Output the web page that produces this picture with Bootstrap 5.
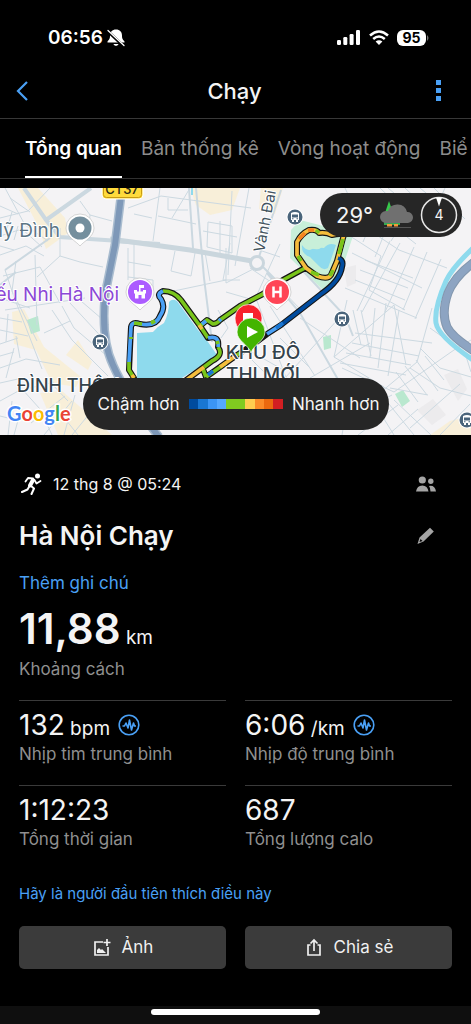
<!DOCTYPE html>
<html lang="vi">
<head>
<meta charset="utf-8">
<meta name="viewport" content="width=device-width, initial-scale=1">
<title>Chạy</title>
<link href="https://cdn.jsdelivr.net/npm/bootstrap@5.3.0/dist/css/bootstrap.min.css" rel="stylesheet">
<style>
  body { background: #000; color: #f4f4f4; font-family: Inter, "Noto Sans", sans-serif; font-size: 17px; line-height: 24px; }
  svg { display: block; flex: none; }
  .status { height: 64px; padding: 12px 42px 0 48px; font-weight: 600; font-size: 19px; color: #fff; }
  .battery { background: #fff; color: #000; border-radius: 6px; width: 29px; height: 16px; font-size: 14px; line-height: 16px; font-weight: 700; }
  .topbar { height: 55px; padding: 0 26px 0 16px; border-bottom: 1px solid #383838; }
  .topbar h1 { font-size: 22px; line-height: 28px; font-weight: 500; }
  .icon-btn { background: none; border: 0; padding: 0; color: #4aa0f5; width: 14px; }
  .icon-btn.soft { color: #a4a4a4; width: 20px; }
  .tabs { height: 60px; padding-left: 25px; gap: 19px; border-bottom: 1px solid #303030; margin-bottom: 9px; font-size: 19px; }
  .tabs a { color: #8c8c8c; text-decoration: none; white-space: nowrap; line-height: 60px; height: 59px; font-weight: 400; }
  .tabs a.active { color: #fff; font-weight: 600; border-bottom: 2px solid #fff; }
  .map-box { height: 247px; background: #f4f3f5; }
  .map-box > svg { width: 100%; height: 100%; }
  .pill { background: #262626; border-radius: 26px; }
  .weather { top: 5px; right: 9px; height: 44px; width: 142px; padding: 0 4px 0 16px; font-size: 22px; }
  .legend-pill { bottom: 5px; height: 52px; width: 306px; padding: 0 9px 0 15px; white-space: nowrap; }
  .scale { width: 94px; height: 10px; }
  .scale i { flex: 1; }
  .details { padding: 37px 19px 0; }
  .date { font-size: 16px; }
  .name { font-size: 26px; line-height: 32px; font-weight: 600; }
  .name-row { margin-bottom: 19px; }
  a.act { color: #4aa0f5; text-decoration: none; }
  .big { font-size: 42px; line-height: 44px; font-weight: 600; margin: 12px 0 6px; }
  .unit { font-size: 19px; line-height: 1; font-weight: 400; }
  .muted { color: #8f8f8f; }
  .distance { margin-bottom: 19px; }
  .stats { gap: 0 19px; display: grid; grid-template-columns: 1fr 1fr; }
  .stat { border-top: 1px solid #3a3a3a; height: 85px; padding-top: 6px; }
  .val { font-size: 28px; line-height: 34px; height: 35px; }
  .like { font-size: 15px; margin: 12px 0 20px; }
  .act-btn { background: #3b3b3b; color: #f0f0f0; border-radius: 5px; height: 43px; font-size: 17px; padding: 0; border: 0; gap: 10px; }
  .homebar { background: #0f0f0f; height: 18px; padding-top: 3px; }
  .homebar span { background: #fff; border-radius: 3px; width: 36%; height: 6px; }
</style>
</head>
<body class="d-flex flex-column min-vh-100">
<div class="status d-flex align-items-center">
  <span>06:56</span>
  <svg class="ms-1" width="18" height="18" viewBox="0 0 18 18"><path fill="#fff" d="M9 .5c3.800 0 6 2.500 6 6 0 3.500 1 4 2.500 6v1H.5v-1c1.500-2 2.500-2.500 2.500-6C3 3 5.200.5 9 .5zM6.500 15h5c-.5 2.400-4.500 2.400-5 0z"/><path stroke="#000" stroke-width="3" d="M0 1.500l17 16"/><path stroke="#fff" stroke-width="1.300" stroke-linecap="round" d="M1 1.500l16 15"/></svg>
  <svg class="ms-auto" width="24" height="16" viewBox="0 0 24 16" fill="#fff"><rect y="10" width="4" height="5" rx="1.200"/><rect x="6.300" y="7" width="4" height="8" rx="1.200"/><rect x="12.600" y="4" width="4" height="11" rx="1.200"/><rect x="19" y="0" width="4" height="15" rx="1.200"/></svg>
  <svg class="mx-2" width="20" height="16" viewBox="0 0 20 16" fill="none" stroke="#fff" stroke-width="2.500"><path d="M1 5.500q9-8 18 0M4.200 9q5.800-5 11.600 0"/><path fill="#fff" stroke="none" d="M6.600 11.500q3.400-2.700 6.800 0L10 15z"/></svg>
  <span class="battery text-center">95</span>
  <svg width="3" height="6" viewBox="0 0 3 6"><path fill="#777" d="M1 0q3 3 0 6z"/></svg>
</div>
<header class="topbar d-flex align-items-center justify-content-between">
  <button class="icon-btn" aria-label="Quay lại"><svg width="14" height="22" viewBox="0 0 14 22" fill="none" stroke="currentColor" stroke-width="2.200"><path d="M11 2L2 11l9 9"/></svg></button>
  <h1 class="m-0 ps-2">Chạy</h1>
  <button class="icon-btn" aria-label="Thêm"><svg class="mx-auto" width="5" height="22" viewBox="0 0 5 22" fill="currentColor"><path d="M0 0h5v5H0zM0 8h5v5H0zM0 16h5v5H0z"/></svg></button>
</header>
<nav class="tabs d-flex overflow-hidden">
  <a href="#" class="active" aria-current="page">Tổng quan</a><a href="#">Bản thống kê</a><a href="#">Vòng hoạt động</a><a href="#">Biể</a>
</nav>
<section class="map-box position-relative overflow-hidden">
<svg viewBox="0 0 471 247" preserveAspectRatio="xMidYMid slice" font-family="Inter, sans-serif">
  <defs>
    <g id="bus"><circle r="8.500" fill="#fff"/><circle r="7.500" fill="#4a647b"/><path fill="#fff" fill-rule="evenodd" d="M-4-4q4-2 8 0v7h-1v2h-2v-2h-2v2h-2v-2h-1zM-3-2.500v3h6v-3zM-3 1.300v1h1.500v-1zM1.500 1.300v1H3v-1z"/></g>
    <g id="pin"><path fill="#fff" stroke="#bbb" stroke-width=".6" d="M0 18C-4 13-14 9-14 0A14 14 0 0114 0C14 9 4 13 0 18z"/></g>
  </defs>
  <!-- built-up areas -->
  <g fill="#faedcf">
    <path d="M18 0h20l27 30 3 15-22 16-9-25zM190 0h50l-8 22-22 5-14-10zM261 0h22l-8 26-16-5zM12 124l12-3 20 38 37 30-5 10-24-4-16-33-22-6zM40 205l22-2 50 44H58zM78 152l14 22-4 8-22-15zM430 247l20-14 21-5v19z" opacity=".75"/>
  </g>
  <g fill="#ecebed"><path d="M444 187l14-6 9 20-9 12zM417 222l16-11 13 16-14 10zM344 80l12-3v18l-9 4z"/></g>
  <g fill="#b9e8cf"><path d="M27 132l11-4 2 15-9 3zM323 149l8-2v13l-7 2zM395 206l8-4 7 11-8 6z"/></g>
  <path fill="#c8efd9" d="M300 32l-9 10-1 28 33 32 16-12 14-42-10-5z"/>
  <path fill="#8edaed" d="M302 57q5 7 10 4 8-2 12-1 5-6 12-3l-8 23q-5 3-9-2l-9-9q-9-3-8-12z"/>
  <path fill="#c8efd9" d="M307 54q8-4 16 2-2 8-12 4z"/>
  <!-- local streets -->
  <g fill="none" stroke="#ccd9e1" stroke-width="1">
    <path d="M0 30l28-7 22-23M5 0l20 37 23 16M0 48l22-7 20 18M10 10l20 14M0 67l26-9 18 10M16 73l-4 30 25 50M3 88l37-9 20 36M35 67l2 70M60 40v28l20 6 23 5M80 13l10 14 22 6M90 27l-2 21M60 68L37 89M0 110l30 10M5 122l80-12M5 82l9 27 28 72M44 145l26-12M52 122l20 30 36 36M62 118l12 22 33 28M70 115l38 41M74 107l35 30M0 180l26-9 34 6M14 160l-8 30M0 213l22-12 18 20 12 26M22 202l32-8M31 235l34-27M44 247l28-34M58 222l20 25M75 207l-11 40M90 225l-18 22M50 194l18 19"/>
    <path d="M0 130l22 4M0 142l28 6M8 126l-2 28M0 156l18-6M16 148l4 22M0 168l14-4M0 195l18-4M12 213l-4 34M0 228l16 4M20 225l-6 22M0 18l18 8M12 24l-6 20M0 58l14 4M18 38l-4 14"/>
    <path d="M128 20l33-12 90 12M160 0l-7 53M134 26l18 4M158 28l38 8M168 10v12h20M190 0l-18 30M203 43l34 6M208 34l24 4v27l-25-6zM220 33v32M232 3l-4 84M230 55l-7 37h17M210 93l-5-29M128 60v32M134 55v45M128 74l23 4M128 89l25 3v15M175 63l-4 20 20 5 4-23M169 104l57-12M226 104l31 9M226 60v35l35-18M249 0l-14 78M280 56l-25 55M280 69l-24-8M250 80l30 20 20 21M257 113l33 87"/>
    <path d="M345 0l18 38 36 24 48 18M340 20l30-14 26 15M380 0l44 42M405 0l35 33M420 0l30 25M360 12l56 44M374 5l42 34M388 0l45 38M399 39l20-24 40 15M445 0l-17 37M434 0l31 31M377 21l-14 33M395 19l-20 50M415 15l-24 38M350 48l31 20-12 34 36 20M390 53l-33 70M400 55l-38 69M414 59l-29 65M427 64l-24 58M441 71l-26 60M352 65l70 35M345 100l72 30M365 72l48 18M360 82l48 18M355 92l50 20"/>
    <path d="M347 112l-13 57 50 30M334 169l60-52 12 60M353 122l8 35M361 122l10 46M375 120l-5 50M386 115l-8 65M399 122l-11 66M355 145l77 10M352 155l67 13M346 165l65 12M340 175l66 12M432 120l-15 54-36 30M430 140l35 25 6 19M420 160l20 20 31 9M410 180l30 20 31 8M396 184l22 30M405 178l22 29M416 172l22 31M425 168l19 24M390 200l38 7M366 202l28 45M380 205l34 42M394 212l37 35M342 180l52 24 60-42 17-10M350 200l-8 47M342 232l50-25M358 247l40-30M388 247l30-26M410 240l50-44M440 247l30-31"/>
    <path d="M218 122l10 18-7 10M250 170l20 20M245 160l40 23M280 150l30 30M285 190l54-60M310 190l60-35M270 118l45 70M300 130l60 40"/>
  </g>
  <g fill="none" stroke="#cbd8e0" stroke-width="2">
    <path d="M24 0l22 32 14 17 60 4M46 32L91 0M112 53l48 3" stroke-width="4"/><path d="M50 50L5 82M189 0l4 60M196 0l8 90 8 64M257 75l24-73M267 85l33 40 40 70M263 79l20 20M303 83l42 45 8 20M0 97l16-13"/>
  </g>
  <path d="M110 51l80 11 62 11" fill="none" stroke="#cad6dd" stroke-width="5"/>
  <circle cx="257" cy="75" r="6.500" fill="#f4f3f5" stroke="#cad6dd" stroke-width="3"/>
  <path d="M192 0v7" stroke="#8edaed" stroke-width="2"/>
  <!-- highway and river -->
  <path d="M122 0l-7 57-10 50q-4 45 8 70 12 28 46 72" fill="none" stroke="#a9bccf" stroke-width="9"/>
  <path d="M122 0l-7 57-10 50q-4 45 8 70 12 28 46 72" fill="none" stroke="#7e98b8" stroke-width="6"/>
  <path d="M473 60Q452 80 446 93 434 120 436 135 438 148 473 172" fill="none" stroke="#8edaed" stroke-width="5"/>
  <path d="M474 74Q454 89 448 105 441 125 447 139 452 149 474 163" fill="none" stroke="#8397ae" stroke-width="9"/>
  <path d="M474 74Q454 89 448 105 441 125 447 139 452 149 474 163" fill="none" stroke="#8da4c2" stroke-width="7"/>
  <path fill="#8edaed" d="M169 114q3-4 8-1L198 142l10 12 9 13-16 11-24 15h-40v-48l16-1q5-6 11-9 5-10 5-21z"/>
  <!-- run track -->
  <g fill="none" stroke-linejoin="round" stroke-linecap="round">
    <path stroke="#151515" stroke-width="6" d="M134 190l-5-8 2-43q1-6 9-3 16 3 20-8 6-9 1-17-5-5 2-8 11 0 18 9L200 138l8 12q12-3 10 9 6 8-6 14l-27 20M200 138l7-6 6 4q4 0 7-4L240 118 263 106 283 92 305 80M206 189l-3-8M206 189l31-22 14-9M251 158l16-12 14-9 40-31q19-13 21-27 2-7-4-9M306 80l-9-13v-13q4-8 12-12 8-1 10 3 7-1 13 2 14-3 11 3l-6 23-6 14q-3 5-14 1z"/>
    <g stroke-width="3.700" stroke-linecap="butt">
      <path stroke="#79c51b" d="M134 190l-5-8v-8M163 103q11 0 18 9L200 138l8 12M200 138l7-6 6 4q4 0 7-4L240 118 263 106 283 92 305 80M218 159q6 8-6 14l-8 6M206 189l-3-8M206 189l20-14M237 167l6-4"/>
      <path stroke="#4aa0f5" d="M129 174l2-35q1-6 9-3 16 3 20-8 6-9 1-17-5-5 2-8M208 150q12-3 10 9M267 146l14-9M202 136l4-3M219 133l2-2"/>
      <path stroke="#79c51b" d="M131 149v2M134 135l8 1M151 135l4-2M217 153l1 3"/>
      <path stroke="#f5bd3c" d="M204 179l-19 14M220 179l17-12M199 137l3 4M132 187l2 3M306 80l-9-13v-13q4-8 12-12 8-1 10 3 7-1 13 2 14-3 11 3l-6 23-6 14q-3 5-14 1z"/>
      <path stroke="#f58220" d="M299 51l6-6M308 42l6 0"/>
      <path stroke="#79c51b" d="M316 42l3 3M343 51l-4 15M298 68l3 5M311 84l8 3M333 82l-3 6"/>
      <path stroke="#004b9e" d="M281 137l40-31q19-13 21-27 2-7-4-9"/>
      <path stroke="#1976d2" d="M208 187l5-4M276 140l7-5M251 158l2-4"/>
    </g>
  </g>
  <!-- place labels -->
  <g stroke="#fff" stroke-width="2" paint-order="stroke" stroke-linejoin="round">
    <text x="60" y="49" text-anchor="end" font-size="19" fill="#5c7585">Mỹ Đình</text>
    <text x="119" y="113" text-anchor="end" font-size="19" fill="#8c48d6">ếu Nhi Hà Nội</text>
    <text x="17" y="204" font-size="18" font-weight="500" fill="#35434c">ĐÌNH THÔN</text>
    <text x="263" y="171" text-anchor="middle" font-size="19" font-weight="500" fill="#35434c">KHU ĐÔ</text>
    <text x="263" y="193" text-anchor="middle" font-size="19" font-weight="500" fill="#35434c">THỊ MỚI</text>
    <text transform="translate(264 65) rotate(-79)" font-size="15" fill="#44545e">Vành Đai</text>
  </g>
  <rect x="102" y="-10" width="41" height="21" rx="4" fill="#ffdb3c" stroke="#fff"/><rect x="103.500" y="-9" width="38" height="18.500" rx="3" fill="none" stroke="#c89c14"/>
  <text x="122" y="6" text-anchor="middle" font-size="13" font-weight="500" fill="#2d2b18">CT37</text>
  <use href="#pin" x="80" y="40"/><circle cx="80" cy="40" r="11.500" fill="#748f9e"/><circle cx="80" cy="40" r="4.500" fill="#fff"/>
  <use href="#pin" x="140" y="104"/><circle cx="140" cy="104" r="12" fill="#ac5cff"/><path fill="#fff" fill-rule="evenodd" d="M134 102h3v1.500h2v-6.500h5v3h-3.500v3.500h2.500v-1.500h3v3.500h-1v5h-10v-5h-1zM138.500 110.500h3v-3.500h-3z"/>
  <use href="#pin" x="277" y="104"/><circle cx="277" cy="104" r="12" fill="#ff4556"/><path stroke="#fff" stroke-width="2.500" d="M273.500 98.500v11M280.500 98.500v11M273 104h8"/>
  <use href="#bus" x="100" y="154"/><use href="#bus" x="295" y="29"/><use href="#bus" x="342" y="131"/><use href="#bus" x="467" y="232"/>
  <path fill="#f8222d" stroke="#fff" stroke-width=".7" d="M249 154c-3-8-14-12-14-24a13.500 13.500 0 0127 0c0 12-10 17-13 24z"/><path fill="#fff" d="M243 125h10v9h-10z"/>
  <path fill="#43b400" stroke="#fff" stroke-width=".7" d="M251 165c-2-8-14-12-14-21a14 14 0 0128 0c0 9-12 13-14 21z"/><path fill="#fff" d="M247 138l11 6-11 6z"/>
  <text x="7" y="233" font-family="Lato, sans-serif" font-size="20" font-weight="700" stroke="#fff" stroke-width="3" paint-order="stroke"><tspan fill="#4285f4">G</tspan><tspan fill="#ea4335">o</tspan><tspan fill="#fbbc04">o</tspan><tspan fill="#4285f4">g</tspan><tspan fill="#34a853">l</tspan><tspan fill="#ea4335">e</tspan></text>
</svg>
<div class="pill weather position-absolute d-flex align-items-center justify-content-between">
  <span>29°</span>
  <svg width="34" height="30" viewBox="0 0 34 30"><path fill="#37c84b" d="M9 1l4 12H5z"/><path fill="#36a852" d="M4 22h16v3H4z"/><path fill="#f39a3b" d="M7 24h5v2.500H7zM14 24h4v2.500h-4z"/><path stroke="#555" d="M4 27.500h27"/><path fill="#707070" d="M6 23a6 6 0 010-12h2a10 10 0 0119 1 5.500 5.500 0 011 11z"/></svg>
  <svg width="38" height="38" viewBox="0 0 38 38"><circle cx="19" cy="19" r="17.500" fill="none" stroke="#e6e6e6" stroke-width="1.500"/><path fill="#fff" d="M16 1.500h6l-3 9z"/><text x="19" y="24" text-anchor="middle" font-size="14" fill="#f4f4f4">4</text></svg>
</div>
<div class="pill legend-pill position-absolute start-50 translate-middle-x d-flex align-items-center justify-content-between">
  <span>Chậm hơn</span>
  <div class="scale d-flex"><i style="background:#004b9e"></i><i style="background:#1976d2"></i><i style="background:#3b95f5"></i><i style="background:#55a8ff"></i><i style="background:#80cb20"></i><i style="background:#80cb20"></i><i style="background:#ffcd50"></i><i style="background:#fb8c28"></i><i style="background:#eb690f"></i><i style="background:#d21f22"></i></div>
  <span>Nhanh hơn</span>
</div>
</section>
<main class="details flex-grow-1">
  <div class="d-flex align-items-center date mb-4">
    <svg class="me-2" width="26" height="22" viewBox="0 0 26 22" fill="none" stroke="#fff" stroke-linecap="round" stroke-linejoin="round"><circle cx="18.500" cy="3" r="2.500" fill="#fff" stroke="none"/><path stroke-width="4" d="M14 7l-3 5.500"/><path stroke-width="1.800" d="M14 5.500l-5-.5-2.500 3.500M15.500 7l2 3.500 4-2.500"/><path stroke-width="2" d="M11.500 12.500l3.500 3-2.500 5.500M10.500 13L8.500 16.500 3 19"/></svg>
    <span>12 thg 8 @ 05:24</span>
    <svg class="ms-auto me-3" width="20" height="16" viewBox="0 0 20 16" fill="#a4a4a4"><circle cx="6.300" cy="4" r="3.600"/><circle cx="14.800" cy="5.300" r="2.700"/><path d="M0 15.500Q1 9.500 6.300 9.500t6.200 6zM13 10q6-1 7 5.500h-5.500Q14.500 12 13 10z"/></svg>
  </div>
  <div class="name-row d-flex align-items-center justify-content-between">
    <h2 class="name m-0">Hà Nội Chạy</h2>
    <button class="icon-btn soft me-3" aria-label="Sửa"><svg width="20" height="18" viewBox="0 0 20 18"><path fill="currentColor" fill-rule="evenodd" d="M14 .8L17.800 4.600 7.500 14.500 1.500 17l2-6.500zM4.500 12l-1 3 3-1z"/></svg></button>
  </div>
  <a class="act d-block" href="#">Thêm ghi chú</a>
  <div class="big">11,88<span class="unit"> km</span></div>
  <div class="muted distance">Khoảng cách</div>
  <div class="stats">
    <div class="stat"><div class="val d-flex align-items-center"><span>132<span class="unit"> bpm</span></span><svg class="ms-2" width="22" height="22" viewBox="0 0 22 22" fill="none" stroke="#4aa0f5" stroke-width="1.600"><circle cx="11" cy="11" r="9.800"/><path d="M4.500 12h2L8 9l2 5 1.500-8 2 10L15.500 9l1 3h1.500" stroke-linejoin="round"/></svg></div><div class="muted">Nhịp tim trung bình</div></div>
    <div class="stat"><div class="val d-flex align-items-center"><span>6:06<span class="unit"> /km</span></span><svg class="ms-2" width="22" height="22" viewBox="0 0 22 22" fill="none" stroke="#4aa0f5" stroke-width="1.600"><circle cx="11" cy="11" r="9.800"/><path d="M4.500 12h2L8 9l2 5 1.500-8 2 10L15.500 9l1 3h1.500" stroke-linejoin="round"/></svg></div><div class="muted">Nhịp độ trung bình</div></div>
    <div class="stat"><div class="val d-flex align-items-center">1:12:23</div><div class="muted">Tổng thời gian</div></div>
    <div class="stat"><div class="val d-flex align-items-center">687</div><div class="muted">Tổng lượng calo</div></div>
  </div>
  <a class="act like d-block" href="#">Hãy là người đầu tiên thích điều này</a>
  <div class="stats">
    <button class="btn act-btn d-flex align-items-center justify-content-center"><svg width="20" height="20" viewBox="0 0 20 20" fill="none" stroke="#f0f0f0" stroke-width="1.700"><path d="M11 4H3v13h13v-8M15 1v7M11.500 4.500h7"/><path fill="#f0f0f0" stroke="none" d="M5 15v-3l2-2 2 2 1-1 4 4z"/></svg>Ảnh</button>
    <button class="btn act-btn d-flex align-items-center justify-content-center"><svg width="20" height="20" viewBox="0 0 20 20" fill="none" stroke="#f0f0f0" stroke-width="1.700"><path d="M6.500 7H4v10h12V7h-2.500M10 13V3M6.500 5.500L10 2l3.500 3.500"/></svg>Chia sẻ</button>
  </div>
</main>
<footer class="homebar d-flex justify-content-center"><span></span></footer>
<script src="https://cdn.jsdelivr.net/npm/bootstrap@5.3.0/dist/js/bootstrap.bundle.min.js"></script>
</body>
</html>
